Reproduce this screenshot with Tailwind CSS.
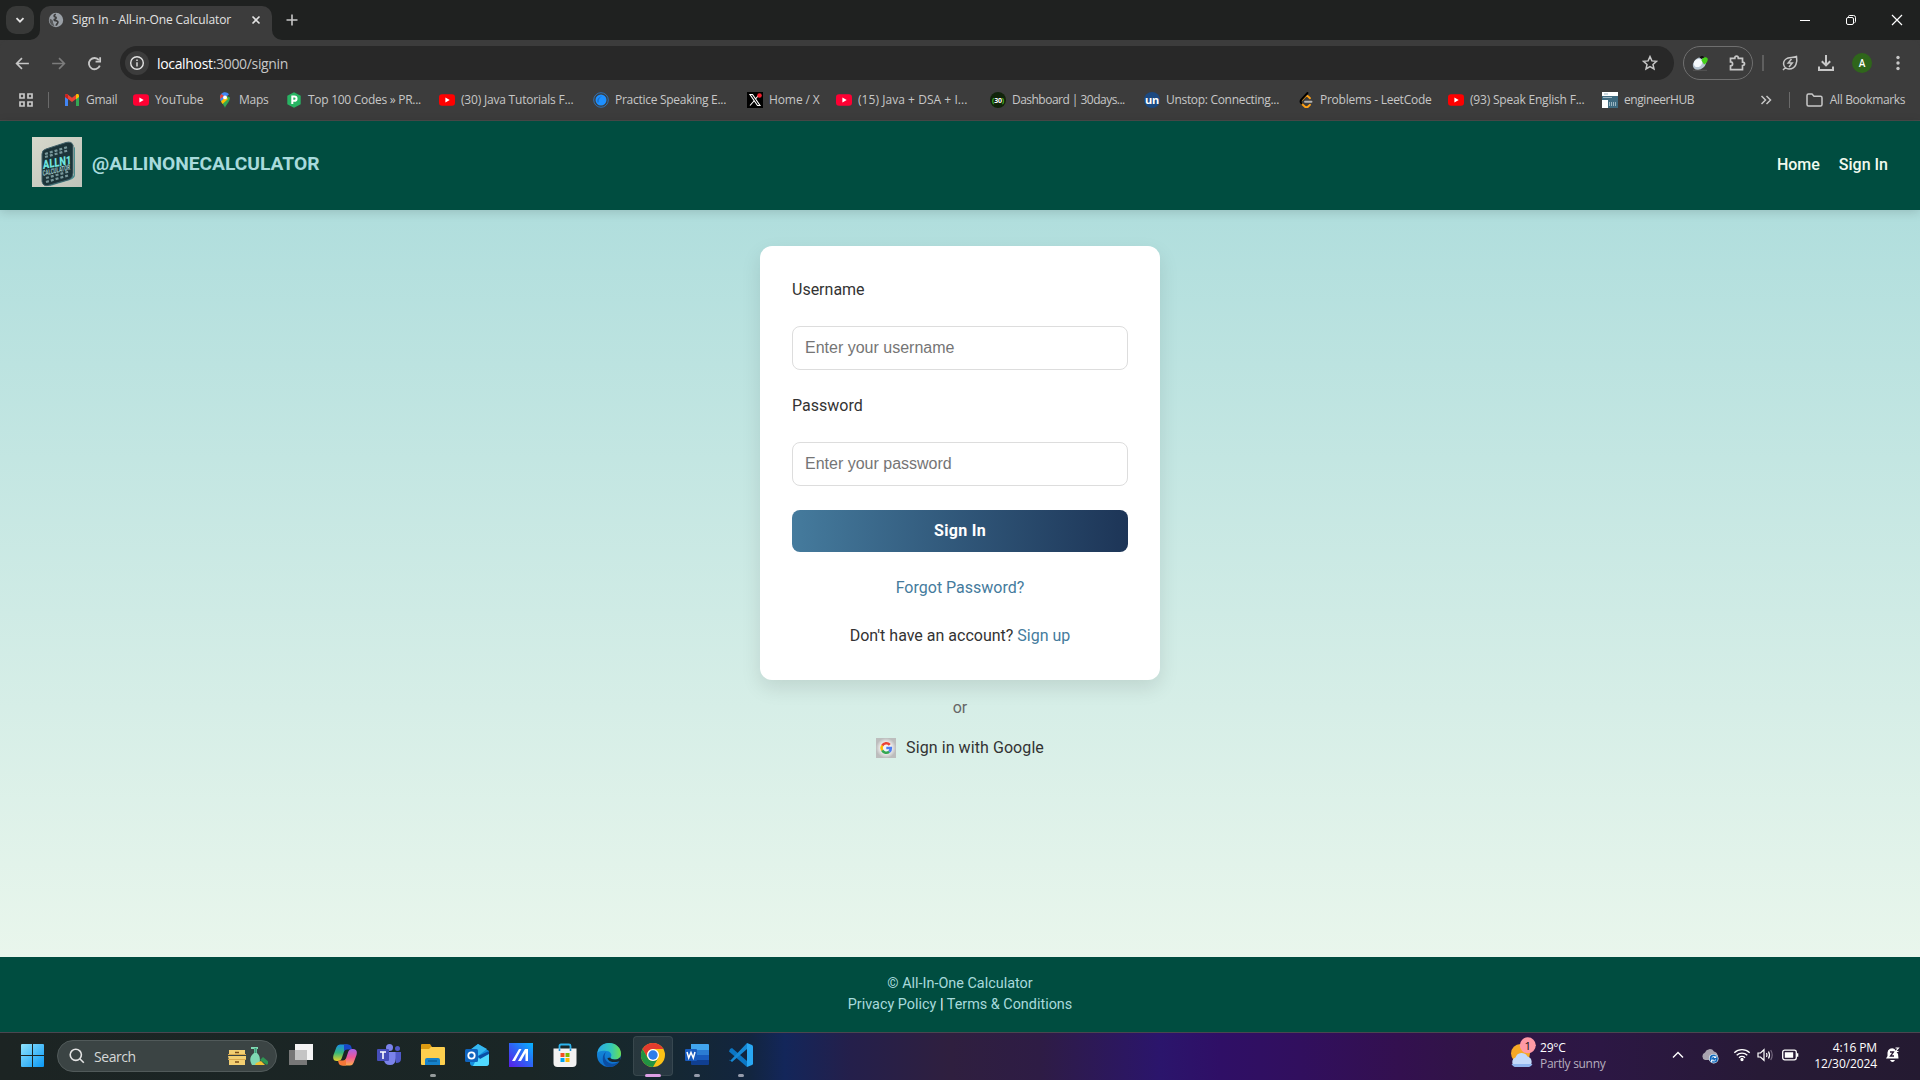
<!DOCTYPE html>
<html lang="en">
<head>
<meta charset="utf-8">
<title>Sign In - All-in-One Calculator</title>
<script src="https://cdn.jsdelivr.net/npm/@tailwindcss/browser@4"></script>
</head>
<body class="w-[1920px] h-[1080px] overflow-hidden flex flex-col bg-[#3c3c3c] font-['Open_Sans',sans-serif] text-[#c7c7c7]">

<!-- Tab strip -->
<div class="h-10 shrink-0 bg-[#1f2120] flex items-start relative">
  <div class="ml-1.5 mt-1.5 w-7 h-7 rounded-[10px] bg-[#383938] flex items-center justify-center">
    <svg class="size-3" viewBox="0 0 12 12" fill="none" stroke="#e3e3e3" stroke-width="1.8"><path d="M2.5 4.2 6 7.7 9.500 4.200"/></svg>
  </div>
  <div class="ml-1.5 mt-1.5 w-[232px] h-[34px] rounded-t-[10px] bg-[#3c3c3c] flex items-center pl-2 pb-1.5 relative">
    <svg class="absolute -left-2.5 bottom-0 size-2.5" viewBox="0 0 10 10"><path d="M10 0v10H0A10 10 0 0 0 10 0Z" fill="#3c3c3c"/></svg>
    <svg class="absolute -right-2.5 bottom-0 size-2.5" viewBox="0 0 10 10"><path d="M0 0v10h10A10 10 0 0 1 0 0Z" fill="#3c3c3c"/></svg>
    <svg class="size-4" viewBox="0 0 16 16"><circle cx="8" cy="8" r="7.200" fill="#9aa0a6"/><path d="M7.800 2.200C5.500 3 5.800 4.800 7.300 5c1.200.2 1 1.800-.2 2-1.500.2-1 1.500.6 1.700 2 .3 2.600 1 2 2.300-.4 1-1.500 1.300-1.500 2.800" fill="none" stroke="#3c3c3c" stroke-width="1.700"/><path d="M1.800 6.800C3.500 7 5.500 8.500 5 10.500l1.500 3.800C3 13.500 1 10.500 1.800 6.800Z" fill="#3c3c3c" opacity=".7"/></svg>
    <span class="ml-2 w-[161px] text-[12px] tracking-[-0.100px] text-[#e3e3e3] whitespace-nowrap">Sign In - All-in-One Calculator</span>
    <svg class="ml-[17px] size-3" viewBox="0 0 12 12" stroke="#e3e3e3" stroke-width="1.600"><path d="m2.500 2.500 7 7m0-7-7 7"/></svg>
  </div>
  <svg class="ml-3 mt-[12px] size-4" viewBox="0 0 16 16" stroke="#c7c7c7" stroke-width="1.600"><path d="M8 2.500v11M2.500 8h11"/></svg>
  <div class="ml-auto mt-3 mr-[15px] flex items-center gap-[30px]">
    <svg class="size-4" viewBox="0 0 16 16" stroke="#fff" stroke-width="1"><path d="M3 8.500h10"/></svg>
    <svg class="size-4" viewBox="0 0 16 16" fill="none" stroke="#fff" stroke-width="1"><rect x="3.500" y="5.500" width="7" height="7" rx="1.500"/><path d="M5.500 5V4.500q0-1 1.200-1H10.500q2 0 2 2v4q0 1-1 1.100"/></svg>
    <svg class="size-4" viewBox="0 0 16 16" stroke="#fff" stroke-width="1.200"><path d="m3 3 10 10m0-10L3 13"/></svg>
  </div>
</div>

<!-- Toolbar -->
<div class="h-[46px] shrink-0 bg-[#3c3c3c] pt-1.5 flex items-start rounded-t-lg">
  <div class="w-[120px] h-[34px] flex items-center pl-[14px] gap-[19px]">
    <svg class="size-[17px]" viewBox="0 0 16 16" fill="none" stroke="#c7c7c7" stroke-width="1.600"><path d="M14 8H2.500M7.500 3l-5 5 5 5"/></svg>
    <svg class="size-[17px]" viewBox="0 0 16 16" fill="none" stroke="#7c7c7c" stroke-width="1.600"><path d="M2 8h11.500M8.500 3l5 5-5 5"/></svg>
    <svg class="size-[17px]" viewBox="0 0 16 16" fill="none" stroke="#c7c7c7" stroke-width="1.700"><path d="M13 10a5.300 5.300 0 1 1-.8-5.200"/><path d="M13.300 2v4.200H9"/></svg>
  </div>
  <div class="w-[1554px] h-[34px] rounded-full bg-[#282828] flex items-center pl-[5px] pr-4">
    <div class="size-6 rounded-full bg-[#3c3c3c] flex items-center justify-center">
      <svg class="size-4" viewBox="0 0 16 16" fill="none" stroke="#e3e3e3" stroke-width="1.400"><circle cx="8" cy="8" r="6.300"/><path d="M8 7.200v4.200M8 4.500v1.500"/></svg>
    </div>
    <span class="ml-2 text-[14px] tracking-[-0.330px] text-white whitespace-nowrap">localhost<span class="text-[#c7c7c7]">:3000/signin</span></span>
    <svg class="ml-auto size-4" viewBox="0 0 16 16" fill="none" stroke="#c7c7c7" stroke-width="1.500"><path d="m8 1.600 1.900 4.300 4.600.4-3.500 3.100 1 4.600L8 11.600 4 14l1-4.600L1.500 6.300l4.600-.4Z"/></svg>
  </div>
  <div class="ml-[9px] w-[70px] h-[34px] rounded-full border border-[#6f6f6f] flex items-center pl-2 gap-[20px]">
    <svg class="size-4" viewBox="0 0 16 16"><path d="M1 15.300h14" stroke="#555" stroke-width="1"/><ellipse cx="7.500" cy="8.500" rx="7.300" ry="5.600" fill="#b7c6d2" transform="rotate(-40 7.500 8.500)"/><ellipse cx="6" cy="8" rx="4.500" ry="3.800" fill="#f4f8fb" transform="rotate(-40 6 8)"/><path d="M9.500 5.500c1-4 5.500-4 6.300-1.500 0 3-2 4.500-3.800 5.500Z" fill="#45d21a"/><path d="M7.500 2.500c1.500-2 4-2 4.500 0L9.500 4Z" fill="#111"/></svg>
    <svg class="size-[18px]" viewBox="0 0 18 18" fill="none" stroke="#c7c7c7" stroke-width="1.700"><path d="M2.500 4.300h4.300c0-3 3.500-3 3.500 0h4.200v3.900c2.700 0 2.700 3.300 0 3.300v4.200h-12v-3.800c2.800-.3 2.800-3.700 0-4Z"/></svg>
  </div>
  <div class="ml-[9px] mt-[9px] w-[2px] h-4 bg-[#5f5f5f]"></div>
  <svg class="ml-[17px] mt-2 size-[18px]" viewBox="0 0 18 18" fill="none" stroke="#c7c7c7" stroke-width="1.500"><path d="M15.500 2.500c1 5-.2 12.500-7.500 12.500C2 14.500 1 8 5 5c2.500-2 7-1 10.500-2.500ZM4.500 13.500 2 16"/><path d="m10.500 5-3.300 4h4L8 13"/></svg>
  <svg class="ml-[18px] mt-2 size-[18px]" viewBox="0 0 18 18" fill="none" stroke="#c7c7c7" stroke-width="2"><path d="M9 1v10M4.800 7.200 9 11.400l4.200-4.200M2 12.500V16h14v-3.500"/></svg>
  <div class="ml-[17px] mt-[7px] size-5 rounded-full bg-[#2f661b] text-white text-[10px] font-medium font-[Roboto] flex items-center justify-center">A</div>
  <svg class="ml-[17px] mt-2 size-[18px]" viewBox="0 0 18 18" fill="#c7c7c7"><circle cx="9" cy="3.500" r="1.700"/><circle cx="9" cy="9" r="1.700"/><circle cx="9" cy="14.500" r="1.700"/></svg>
</div>

<!-- Bookmarks -->
<div class="h-[35px] shrink-0 bg-[#3c3c3c] border-b border-[#4a4a4a] flex items-start text-[12px] leading-7 tracking-[-0.250px] whitespace-nowrap">
  <div class="w-16 h-7 flex items-center pl-[19px] shrink-0">
    <svg class="size-[14px]" viewBox="0 0 14 14" fill="none" stroke="#c7c7c7" stroke-width="1.700"><path d="M1 1h4v4H1ZM9 1h4v4H9ZM1 9h4v4H1ZM9 9h4v4H9Z"/></svg>
    <div class="ml-[15px] w-px h-4 bg-[#6a6a6a]"></div>
  </div>
  <div class="w-[69px] h-7 flex items-center gap-1.5 shrink-0">
    <svg class="size-4" viewBox="0 0 16 16"><path d="M1 14V4l3 2.200V14Z" fill="#4285f4"/><path d="M12 14V6.200L15 4v10Z" fill="#34a853"/><path d="M1 5V3.500C1 2 2.500 1.500 3.700 2.400L8 5.700l4.300-3.300L12 7 8 10 4 7Z" fill="#ea4335"/><path d="M12 2.600C13.500 1.500 15 2.300 15 3.700V5l-3 2.200Z" fill="#fbbc04"/><path d="M1 3.700C1 2.300 2.500 1.600 4 2.600v4.600L1 5Z" fill="#c5221f"/></svg>
    <span>Gmail</span>
  </div>
  <div class="w-[84px] h-7 flex items-center gap-1.5 shrink-0">
    <svg class="size-4" viewBox="0 0 16 16"><rect y="2.300" width="16" height="11.400" rx="3" fill="#ff0033"/><path d="m6.400 5.500 4.300 2.500-4.300 2.500Z" fill="#fff"/></svg>
    <span class="tracking-[-0.150px]">YouTube</span>
  </div>
  <div class="w-[69px] h-7 flex items-center gap-1.5 shrink-0">
    <svg class="size-4" viewBox="0 0 16 16"><path d="M8 16c-.6-3-5-6-5-10.500L8 3l5 2.500C13 10 8.600 13 8 16Z" fill="#34a853"/><path d="M3 5.500C3 2.500 5 .2 8 .2c1.600 0 3 .7 4 2L4 9.500C3.300 8.300 3 7 3 5.500Z" fill="#4285f4"/><path d="M4 9.500 9 4l2 3-5.500 5Z" fill="#fbbc04"/><path d="M4.200 2.100A5 5 0 0 0 3.200 7L7 4Z" fill="#ea4335"/><circle cx="8" cy="5.400" r="1.900" fill="#fff"/></svg>
    <span>Maps</span>
  </div>
  <div class="w-[153px] h-7 flex items-center gap-1.5 shrink-0">
    <svg class="size-4" viewBox="0 0 16 16"><path d="m8 .3 6.700 3.500v8.400L8 15.700 1.300 12.200V3.800Z" fill="#28b463"/><path d="M6.300 12V4.500h2c3 0 3 4.300 0 4.300h-2" fill="none" stroke="#fff" stroke-width="2"/></svg>
    <span class="tracking-[-0.280px]">Top 100 Codes » PR...</span>
  </div>
  <div class="w-[154px] h-7 flex items-center gap-1.5 shrink-0">
    <svg class="size-4" viewBox="0 0 16 16"><rect y="2.300" width="16" height="11.400" rx="3" fill="#f00"/><path d="m6.400 5.500 4.300 2.500-4.300 2.500Z" fill="#fff"/></svg>
    <span class="tracking-[-0.200px]">(30) Java Tutorials F...</span>
  </div>
  <div class="w-[154px] h-7 flex items-center gap-1.5 shrink-0">
    <svg class="size-4" viewBox="0 0 16 16"><circle cx="8" cy="8" r="5.500" fill="#1e90ff"/><circle cx="8" cy="8" r="7.300" fill="none" stroke="#2b7cd0" stroke-width=".8"/><path d="M4.500 10.500C3.500 7 6 4.500 9 4.500 6.500 5.300 5.500 7.500 5.700 10.500" fill="#1870cf"/></svg>
    <span class="tracking-[-0.280px]">Practice Speaking E...</span>
  </div>
  <div class="w-[89px] h-7 flex items-center gap-1.5 shrink-0">
    <svg class="size-4" viewBox="0 0 16 16"><path fill="#000" d="M0 0h16v16H0Z"/><path d="M3 2.500h2.500L13 13.500h-2.500ZM12.300 2.500 8.500 7M7 9l-4 4.500" fill="none" stroke="#fff" stroke-width="1.100"/><circle cx="12.500" cy="3.500" r="2.300" fill="#f4212e"/></svg>
    <span class="tracking-[-0.100px]">Home / X</span>
  </div>
  <div class="w-[154px] h-7 flex items-center gap-1.5 shrink-0">
    <svg class="size-4" viewBox="0 0 16 16"><rect y="2.300" width="16" height="11.400" rx="3" fill="#ff0033"/><path d="m6.400 5.500 4.300 2.500-4.300 2.500Z" fill="#fff"/></svg>
    <span class="tracking-[0.050px]">(15) Java + DSA + I...</span>
  </div>
  <div class="w-[154px] h-7 flex items-center gap-1.5 shrink-0">
    <div class="size-4 rounded-full bg-[#11240b] flex items-center justify-center text-[7px] font-bold text-white leading-none"><span class="text-[#4fc42c]">(</span>30<span class="text-[#4fc42c]">)</span></div>
    <span class="tracking-[-0.520px]">Dashboard | 30days...</span>
  </div>
  <div class="w-[154px] h-7 flex items-center gap-1.5 shrink-0">
    <div class="size-4 rounded-full bg-[#1c4980] flex items-center justify-center text-[11px] font-bold text-white leading-none"><span class="-mt-0.5">un</span></div>
    <span class="tracking-[-0.310px]">Unstop: Connecting...</span>
  </div>
  <div class="w-[150px] h-7 flex items-center gap-1.5 shrink-0">
    <svg class="size-4" viewBox="0 0 16 16" fill="none" stroke-width="1.900" stroke-linecap="round"><path d="m12 6.200-1.800-1.700c-1-1-2.200-.8-3 0L4 7.800m-.5 3.700 3.200 3c1 1 2.500 1 3.500 0L12 12.800" stroke="#ffa116"/><path d="M9.500 1 3.500 7.500c-1.500 1.600-1 3 0 4" stroke="#000"/><path d="M7 9.700h6.500" stroke="#b3b3b3"/></svg>
    <span>Problems - LeetCode</span>
  </div>
  <div class="w-[154px] h-7 flex items-center gap-1.5 shrink-0">
    <svg class="size-4" viewBox="0 0 16 16"><rect y="2.300" width="16" height="11.400" rx="3" fill="#f00"/><path d="m6.400 5.500 4.300 2.500-4.300 2.500Z" fill="#fff"/></svg>
    <span class="tracking-[-0.200px]">(93) Speak English F...</span>
  </div>
  <div class="h-7 flex items-center gap-1.5 shrink-0">
    <svg class="size-4" viewBox="0 0 16 16"><path fill="#fff" d="M0 0h16v16H0Z"/><path fill="#3f6b80" d="M0 4h16v4H0ZM6 7h10v9H6Z"/><path d="M1 5.500h9M7.500 10v4m2-4v4m2-4v4m2-4v4M2 2h4" stroke="#9db6c2"/></svg>
    <span class="tracking-[-0.420px]">engineerHUB</span>
  </div>
  <div class="ml-auto h-7 flex items-center pr-[15px]">
    <svg class="size-3" viewBox="0 0 12 12" fill="none" stroke="#c7c7c7" stroke-width="1.500"><path d="m1.500 2 4 4-4 4m5-8 4 4-4 4"/></svg>
    <div class="ml-[17px] w-px h-4 bg-[#6a6a6a]"></div>
    <svg class="ml-[16px] w-[17px] h-[14px]" viewBox="0 0 17 14" fill="none" stroke="#c7c7c7" stroke-width="1.500"><path d="M1 11.500V2.500Q1 1 2.500 1H6l2 2.200h6.500Q16 3.200 16 4.700v6.800Q16 13 14.500 13h-12Q1 13 1 11.500Z"/></svg>
    <span class="ml-[7px] tracking-[-0.370px]">All Bookmarks</span>
  </div>
</div>

<!-- Page header -->
<header class="h-[89px] shrink-0 bg-[#004d40] px-8 pt-4 flex items-start justify-between font-[Roboto] shadow-[0_2px_10px_rgba(0,0,0,0.15)] relative z-10">
  <div class="h-[50px] flex items-center gap-2.5">
    <svg class="size-[50px]" viewBox="0 0 50 50">
      <defs><linearGradient id="lg" x2="1" y2="1"><stop stop-color="#d6d8cb"/><stop offset="1" stop-color="#c0c4bb"/></linearGradient></defs>
      <path fill="url(#lg)" d="M0 0h50v50H0Z"/>
      <path d="m15 46 23-5q4-1 4-5V9l-3-4 4 6v27q0 3-5 5l-20 6Z" fill="#2b7f83" opacity=".8"/>
      <path d="M14 12 34 5.500q6-1.500 7 3V36q0 5-4 6.500L16 48.500q-5 1-6-4V17q0-4 4-5Z" fill="#1c3439" stroke="#406069"/>
      <path d="m13 17 23-7M13 20l23-6.500M14 41l23-6.500M14 45l22-6.500" stroke="#78979a" stroke-width="2.200" stroke-dasharray="3 2"/>
      <text transform="translate(11 32) rotate(-10) skewX(-8)" font-family="Roboto" font-size="12" font-weight="900" fill="#6fe3df" textLength="29" lengthAdjust="spacingAndGlyphs">ALLN1</text>
      <text transform="translate(11 39) rotate(-13) skewX(-8)" font-family="Roboto" font-size="7.500" font-weight="700" fill="#9dc5c7" textLength="28" lengthAdjust="spacingAndGlyphs">CALCULATOR</text>
    </svg>
    <span class="mt-[5px] text-[19.200px] font-bold text-[#a8dadc] whitespace-nowrap">@ALLINONECALCULATOR</span>
  </div>
  <nav class="h-[50px] pt-[6px] flex items-center gap-[19px] text-[16px] font-medium text-[#f1faee]"><a>Home</a><a>Sign In</a></nav>
</header>

<!-- Sign-in form -->
<main class="h-[747px] shrink-0 bg-linear-to-b from-[#b0dedd] to-[#e9f6ec] flex flex-col items-center pt-9 font-[Roboto] text-[16px] text-[#333]">
  <div class="w-[400px] h-[434px] rounded-xl bg-white shadow-[0_8px_20px_rgba(0,0,0,0.1)] p-8 flex flex-col">
    <label class="leading-6 h-12">Username</label>
    <div class="h-11 border border-[#ddd] rounded-lg px-3 flex items-center font-['Liberation_Sans',sans-serif] text-[#757575]">Enter your username</div>
    <label class="leading-6 mt-6 h-12">Password</label>
    <div class="h-11 border border-[#ddd] rounded-lg px-3 flex items-center font-['Liberation_Sans',sans-serif] text-[#757575]">Enter your password</div>
    <div class="mt-6 h-[42px] rounded-lg bg-linear-to-r from-[#457b9d] to-[#1d3557] text-white font-bold tracking-[0.300px] flex items-center justify-center">Sign In</div>
    <a class="mt-6 leading-6 text-center text-[#457b9d]">Forgot Password?</a>
    <p class="mt-6 leading-6 text-center">Don't have an account? <a class="text-[#457b9d]">Sign up</a></p>
  </div>
  <p class="mt-4 leading-6 text-[#666]">or</p>
  <div class="mt-4 h-6 flex items-center gap-2.5">
    <svg class="size-5" viewBox="0 0 20 20"><defs><radialGradient id="gg"><stop offset=".5" stop-color="#f4f4f4"/><stop offset="1" stop-color="#bdbdbd"/></radialGradient></defs><path fill="url(#gg)" d="M0 0h20v20H0Z"/><g fill="none" stroke-width="2.600"><path d="M13.800 6.800A4.700 4.700 0 0 0 6.200 7.600" stroke="#ea4335"/><path d="M6.200 7.600a4.700 4.700 0 0 0 0 4.800" stroke="#fbbc05"/><path d="M6.200 12.400a4.700 4.700 0 0 0 7 1.300" stroke="#34a853"/><path d="M13.200 13.700A4.500 4.500 0 0 0 14.800 10H10.300" stroke="#4c7ef3"/></g></svg>
    <span class="tracking-[0.080px]">Sign in with Google</span>
  </div>
</main>

<!-- Page footer -->
<footer class="h-[75px] shrink-0 bg-[#004d40] pt-4 font-[Roboto] text-[14.400px] leading-[21px] text-center text-[#a8dadc]">
  <p>© All-In-One Calculator</p>
  <p><a>Privacy Policy</a> <span class="text-white">|</span> <a>Terms &amp; Conditions</a></p>
</footer>

<!-- Taskbar -->
<div class="h-12 shrink-0 border-t border-[#4a4650] bg-[linear-gradient(90deg,#1c2423_0,#1a2626_530px,#16282f_650px,#12253f_750px,#13265a_785px,#241f4b_850px,#2f1f3f_950px,#2e1c45_1040px,#2b156c_1160px,#2f0f66_1220px,#310f5e_1300px,#33104f_1400px,#301545_1480px,#2c1744_1600px,#271a36_1760px,#241a31_1920px)] flex items-start">
  <svg class="ml-[21px] mt-[11px] size-[23px]" viewBox="0 0 23 23"><defs><linearGradient id="wn" x2="1" y2="1"><stop stop-color="#8fe3fd"/><stop offset="1" stop-color="#0a98f5"/></linearGradient></defs><path fill="url(#wn)" d="M1 0h10v11H0V1q0-1 1-1ZM12 0h10q1 0 1 1v10H12ZM0 12h11v11H1q-1 0-1-1ZM12 12h11v10q0 1-1 1H12Z"/></svg>
  <div class="ml-[13px] mt-[7px] w-[220px] h-8 rounded-full bg-[#3b4444] border border-[#515a5a] flex items-center pl-[11px] pr-2">
    <svg class="size-4" viewBox="0 0 16 16" fill="none" stroke="#e4e4e4" stroke-width="1.600"><circle cx="6.800" cy="6.800" r="5.600"/><path d="m10.800 10.800 4 4"/></svg>
    <span class="ml-[9px] text-[14px] text-[#d5d8d8] tracking-[-0.450px]">Search</span>
    <svg class="ml-auto w-10 h-5" viewBox="0 0 40 20"><path d="M1 4h16v5H1ZM0 10h18v4H1ZM1 14h16v5H1Z" fill="#f3cf72"/><path d="M0 8.500h18M0 13.500h18" stroke="#d9a84c"/><path d="M7 6.500h4M7 16h4" stroke="#7a4d18" stroke-width="1.400"/><path d="M23 1h7v2h-1v4c4 3 3 9 2 12h-7c-3-5-2-9 2-12V3h-3Z" fill="#80d8b3"/><path d="M27.500 2v5" stroke="#3d9c78" stroke-width="2"/><path d="m32 14 3-3 6 5-2 3Z" fill="#2f9553"/><path d="m28 17 5-2 4 4H27Z" fill="#f0c233"/></svg>
  </div>
  <div class="ml-[2px] flex">
    <div class="w-11 h-11 flex items-center justify-center"><svg class="size-6" viewBox="0 0 24 24"><path fill="#777" d="M0 7h18v15H0Z"/><path fill="#f4f4f4" d="M6 1h18v16H6Z"/><path fill="#c4c4c4" d="M6 7h12v10H6Z"/></svg></div>
    <div class="w-11 h-11 flex items-center justify-center"><svg class="size-6" viewBox="0 0 24 24"><defs><linearGradient id="c1" y2="1" x2="0"><stop stop-color="#1b8de8"/><stop offset=".5" stop-color="#35b77a"/><stop offset="1" stop-color="#e8d229"/></linearGradient><linearGradient id="c2" y2="1" x2="0"><stop stop-color="#a463e8"/><stop offset=".5" stop-color="#ee5699"/><stop offset="1" stop-color="#ffae4b"/></linearGradient></defs><path d="M7 1.500h9q-3 0-4 4l-3 9q-1 4-5 3.500Q-1 18 .5 12l3-8Q4.500 1.500 7 1.500Z" fill="url(#c1)"/><path d="M11 1.500h4q3 0 3.500 3l.5 2h-5q-2 0-3 2Z" fill="#1747c9"/><path d="M17 22.500H8q3 0 4-4l3-9q1-4 5-3.500 5 0 3.500 6l-3 8q-1 2.500-3.500 2.500Z" fill="url(#c2)"/><path d="M13 22.500H9q-3 0-3.500-3L5 17.500h5q2 0 3-2Z" fill="#f47738"/></svg></div>
    <div class="w-11 h-11 flex items-center justify-center"><svg class="size-6" viewBox="0 0 24 24"><circle cx="12.500" cy="4.500" r="3.500" fill="#7b83eb"/><circle cx="20.500" cy="5.500" r="2.500" fill="#5059c9"/><path d="M17 9h7v7q0 4-5 4Z" fill="#5059c9"/><path d="M7 9h11.500v7q0 6-5.500 6t-6-5Z" fill="#7b83eb"/><rect y="6" width="12" height="12" rx="1" fill="#464eb8"/><path d="M3 9h6M6 9v7" stroke="#fff" stroke-width="1.600"/></svg></div>
    <div class="w-11 h-11 flex items-center justify-center relative"><svg class="size-6" viewBox="0 0 24 24"><path d="M0 2q0-1 1-1h8l2 3v6H0Z" fill="#dc9a11"/><path d="M0 6h8l2-2h13q1 0 1 1v16q0 1-1 1H1q-1 0-1-1Z" fill="#fdcf4e"/><path d="M4 22v-5q0-2 2-2h11q2 0 2 2v5Z" fill="#1582cb"/><path d="M7 18h9" stroke="#0d5f9d" stroke-width="1.500"/></svg><i class="absolute bottom-0 left-[19px] w-1.5 h-[3px] rounded-full bg-[#959b9b]"></i></div>
    <div class="w-11 h-11 flex items-center justify-center"><svg class="size-6" viewBox="0 0 24 24"><path d="m5 7 8-6 11 7v12q0 3-3 3H8q-3 0-3-3Z" fill="#1490df"/><path d="m5 7 8-6 9 5-9 7Z" fill="#35b8f1"/><path d="m24 8-13 9-3 6h13q3 0 3-3Z" fill="#50d9ff"/><path d="m13 13 11-5v3l-9 5Z" fill="#0a4ea5"/><rect y="6" width="13" height="13" rx="1.500" fill="#0f63bd"/><circle cx="6.500" cy="12.500" r="3.200" fill="none" stroke="#fff" stroke-width="1.800"/></svg></div>
    <div class="w-11 h-11 flex items-center justify-center"><svg class="size-6" viewBox="0 0 24 24"><defs><linearGradient id="ar" x1="0" y1="1" x2="1" y2="0"><stop stop-color="#5a1de8"/><stop offset=".5" stop-color="#2f62f5"/><stop offset="1" stop-color="#05b6ff"/></linearGradient></defs><path fill="url(#ar)" d="M0 0h24v24H0Z"/><path d="M3 18 10 6h2.500L6 18ZM9 18l7-12h3v12h-2.500V10L12 18Z" fill="#fff"/></svg></div>
    <div class="w-11 h-11 flex items-center justify-center"><svg class="size-6" viewBox="0 0 24 24"><path d="M6.500 7V3q0-1.500 1.500-1.500h8q1.500 0 1.500 1.500v4" fill="none" stroke="#2cb4ee" stroke-width="1.800"/><path d="M.5 5.500h23V20q0 4-4 4h-15q-4 0-4-4Z" fill="#f2f2f2"/><path d="M7.500 10h4v4h-4Z" fill="#f25022"/><path d="M12.500 10h4v4h-4Z" fill="#7fba00"/><path d="M7.500 15h4v4h-4Z" fill="#00a4ef"/><path d="M12.500 15h4v4h-4Z" fill="#ffb900"/><path d="M6.500 8V5.500m11 0V8" stroke="#1e90d0" stroke-width="1.600"/></svg></div>
    <div class="w-11 h-11 flex items-center justify-center"><svg class="size-6" viewBox="0 0 24 24"><defs><linearGradient id="e1"><stop stop-color="#2aa9e8"/><stop offset=".6" stop-color="#35c9b4"/><stop offset="1" stop-color="#6ee04d"/></linearGradient><linearGradient id="e2" y2="1" x2="0"><stop stop-color="#1390dd"/><stop offset="1" stop-color="#0f6fcc"/></linearGradient></defs><circle cx="12" cy="12" r="12" fill="url(#e2)"/><path d="M.5 10C1 4 6 0 12 0c7 0 12 5 12 10.500 0 4-3 6-6 6-3.500 0-5-1.200-4.500-2 1.500-1.500 1.500-6-4-6.500C5 7.500 2 8 .5 10Z" fill="url(#e1)"/><path d="M9 9c-3 4-1 10 5 11.500 4 .8 7-1 8.500-2.500-3 5-8 6.500-12 5.800C5 22 4 12 9 9Z" fill="#0b4ea3"/><path d="M13.500 14.500c-.5.800 1 2 4.500 2 3 0 5-1.500 5.700-3.200L23 18c-4 2-12 1.500-12.500-3Z" fill="#1a2a31"/></svg></div>
    <div class="w-11 h-11 flex items-center justify-center relative"><div class="absolute left-0.5 top-[3px] w-10 h-10 rounded bg-white/8 border border-white/8"></div><svg class="relative size-6" viewBox="0 0 24 24"><circle cx="12" cy="12" r="12" fill="#fbc116"/><path d="M1.600 6a12 12 0 0 1 20.800 0H12a6 6 0 0 0-5.200 9Z" fill="#e33b2e"/><path d="M1.600 6a12 12 0 0 0 10.400 18l5.200-9A6 6 0 0 1 6.800 15Z" fill="#229342"/><circle cx="12" cy="12" r="6" fill="#fff"/><circle cx="12" cy="12" r="4.700" fill="#2e7de9"/></svg><i class="absolute bottom-0 left-[14px] w-4 h-[3px] rounded-full bg-[#dd9fe4]"></i></div>
    <div class="w-11 h-11 flex items-center justify-center relative"><svg class="size-6" viewBox="0 0 24 24"><path d="M6 1h17q1 0 1 1v5H6Z" fill="#41a5ee"/><path d="M6 7h18v5H6Z" fill="#2b7cd3"/><path d="M6 12h18v5H6Z" fill="#185abd"/><path d="M6 17h18v4q0 1-1 1H7q-1 0-1-1Z" fill="#103f91"/><rect y="6" width="12" height="12" rx="1" fill="#185abd"/><path d="m2 9 1.700 6L6 9.500 8.300 15 10 9" fill="none" stroke="#fff" stroke-width="1.500"/></svg><i class="absolute bottom-0 left-[19px] w-1.5 h-[3px] rounded-full bg-[#959bab]"></i></div>
    <div class="w-11 h-11 flex items-center justify-center relative"><svg class="size-6" viewBox="0 0 24 24"><path d="m1 6 2-1 15 13v6L0 8.500Z" fill="#0b76c4"/><path d="M1 18 18 0v6L3 19l-3-2.500Z" fill="#1689d6"/><path d="M18 0l5 2q1 .5 1 1.500v17q0 1-1 1.500l-5 2Z" fill="#29a7f3"/></svg><i class="absolute bottom-0 left-[19px] w-1.5 h-[3px] rounded-full bg-[#959bab]"></i></div>
  </div>

  <div class="ml-auto w-[410px] flex items-start text-[12px] text-white whitespace-nowrap">
    <svg class="mt-1 w-[26px] h-8" viewBox="0 0 26 32"><circle cx="10.500" cy="16.500" r="9.500" fill="#f7a825"/><path d="M6 30a5 5 0 0 1-.5-9.500 6.500 6.500 0 0 1 12-1A5.500 5.500 0 0 1 18 30Z" fill="#c3dafa"/><path d="M1.500 27q1.500 3 4.500 3h12q3 0 4.500-3Z" fill="#8fb6ef"/><circle cx="17.800" cy="8.300" r="8" fill="#ff99a4"/><text x="17.800" y="12.500" text-anchor="middle" font-family="Open Sans" font-size="11.500" fill="#111">1</text></svg>
    <div class="ml-[4px] mt-[7px] w-[132px] leading-4 tracking-[-0.200px]"><p>29°C</p><p class="text-[#b7aebf] tracking-[-0.300px]">Partly sunny</p></div>
    <svg class="mt-[16px] w-3 h-3" viewBox="0 0 12 12" fill="none" stroke="#fff" stroke-width="1.400"><path d="m1 8.500 5-5 5 5"/></svg>
    <svg class="ml-[17px] mt-[15px] w-[18px] h-4" viewBox="0 0 18 16"><path d="M4 12a4 4 0 0 1 0-7.500 5 5 0 0 1 9-1q4 1 3.500 5L12 12Z" fill="#a9a4af"/><circle cx="12.700" cy="10.700" r="4.800" fill="#fff"/><circle cx="12.700" cy="10.700" r="4.100" fill="#0f67bb"/><path d="M10.500 10q1-2 3.500-1.300l1 .8m0-2v2h-2m2 2q-1 2-3.500 1.300l-1-.8m0 2v-2h2" fill="none" stroke="#fff" stroke-width=".9"/></svg>
    <svg class="ml-[14px] mt-[14px] w-[18px] h-4" viewBox="0 0 18 16" fill="none" stroke="#fff" stroke-width="1.300"><path d="M1.300 5.800a11 11 0 0 1 15.400 0M3.700 8.300a7.500 7.500 0 0 1 10.600 0M6 10.700a4.200 4.200 0 0 1 6 0"/><circle cx="9" cy="12.500" r="1" fill="#fff"/></svg>
    <svg class="ml-[6px] mt-[14px] w-[17px] h-4" viewBox="0 0 17 16" fill="none" stroke="#fff" stroke-width="1.200"><path d="M1 6h2.500L7 2.700v10.600L3.500 10H1ZM9.500 6q1 2 0 4M11.500 4.500q2 3.500 0 7"/><path d="M13.700 3q3 5 0 10" stroke="#75697f"/></svg>
    <svg class="ml-[8px] mt-[14px] w-[17px] h-4" viewBox="0 0 17 16"><rect x=".7" y="3.200" width="13.600" height="9.600" rx="2" fill="none" stroke="#fff" stroke-width="1.300"/><path d="M2.800 5.200h8.400v5.600H2.800ZM15 6.300h1.300v3.400H15Z" fill="#fff"/></svg>
    <div class="ml-auto mt-[7px] leading-4 text-right tracking-[-0.100px]"><p>4:16 PM</p><p>12/30/2024</p></div>
    <svg class="ml-2 mr-[20px] mt-[14px] size-[15px]" viewBox="0 0 15 15"><path d="M1 11.500 2.500 9V5.500a4.500 4.500 0 0 1 7-3.500l3.500 5 .5 4.500ZM5 13h5q-1 2-2.500 2T5 13Z" fill="#fff"/><path d="M5 5h3.500L5.500 9H9" fill="none" stroke="#291a35" stroke-width="1.300"/><path d="M10.500 1h3l-3 3.500h3" fill="none" stroke="#fff" stroke-width="1.100"/></svg>
  </div>
</div>
</body>
</html>
